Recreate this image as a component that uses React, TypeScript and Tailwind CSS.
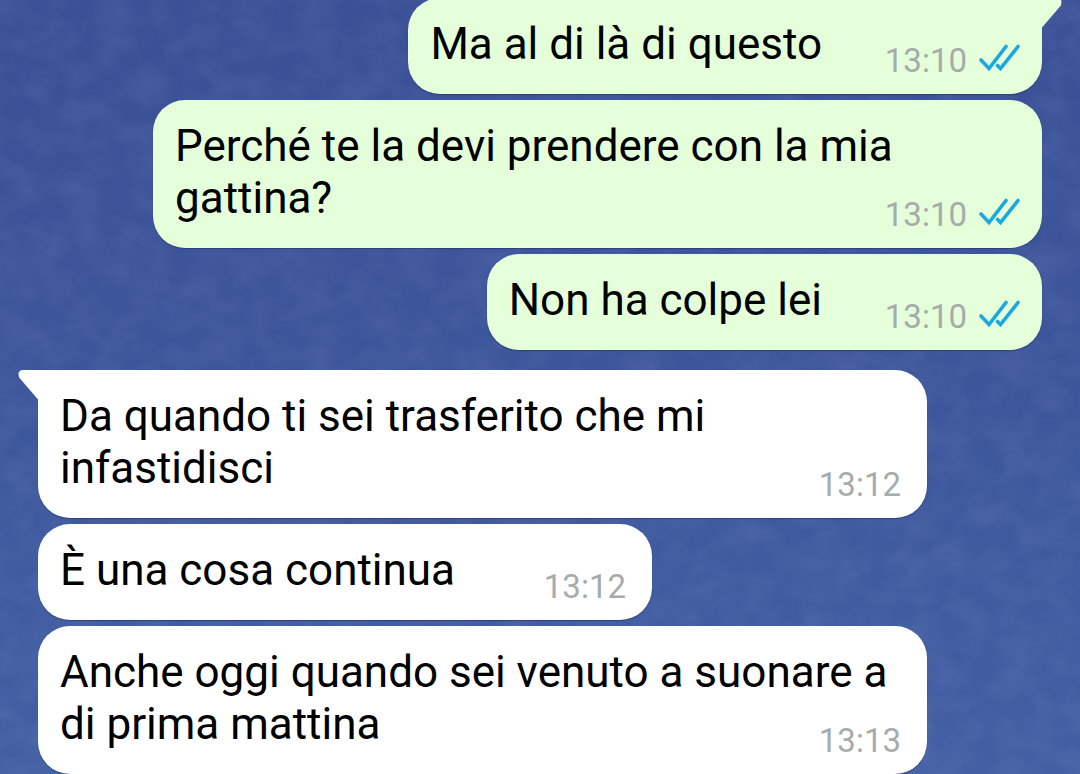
import clsx from "clsx";

interface Message {
  id: number;
  text: string;
  time: string;
  sent?: boolean;
  tail?: boolean;
}

const groups: Message[][] = [
  [
    { id: 1, text: "Ma al di là di questo", time: "13:10", sent: true, tail: true },
    { id: 2, text: "Perché te la devi prendere con la mia gattina?", time: "13:10", sent: true },
    { id: 3, text: "Non ha colpe lei", time: "13:10", sent: true },
  ],
  [
    { id: 4, text: "Da quando ti sei trasferito che mi infastidisci", time: "13:12", tail: true },
    { id: 5, text: "È una cosa continua", time: "13:12" },
    { id: 6, text: "Anche oggi quando sei venuto a suonare a di prima mattina", time: "13:13" },
  ],
];

export default function App() {
  return (
    <main className="relative isolate min-h-screen overflow-hidden bg-linear-to-b from-[#3b5096] via-[#3d569b] to-[#4360a4] font-[Roboto,sans-serif]">
      <Wallpaper />
      <div className="-mt-0.5 flex flex-col gap-5 px-[38px]">
        {groups.map((messages) => (
          <ul key={messages[0].id} className="flex flex-col gap-1.5">
            {messages.map((message) => (
              <Bubble key={message.id} message={message} />
            ))}
          </ul>
        ))}
      </div>
    </main>
  );
}

const Bubble = ({ message }: { message: Message }) => {
  const { text, time, sent, tail } = message;

  return (
    <li
      className={clsx(
        "relative w-fit max-w-[calc(100%-115px)] rounded-[32px] px-[22px] pt-5 pb-6 shadow-[0_1px_1px_rgba(20,35,80,0.45)]",
        sent ? "self-end bg-[#e4ffda]" : "self-start bg-white",
        tail && (sent ? "rounded-tr-none" : "rounded-tl-none"),
      )}
    >
      {tail && <Tail sent={sent} />}
      <p className="text-[44px] leading-[52px] text-black">
        {text}
        {/* keeps the last line clear of the time */}
        <span className={clsx("inline-block h-1", sent ? "w-[198px]" : "w-[175px]")} />
      </p>
      <div
        className={clsx(
          "absolute bottom-[13px] flex items-center gap-3 text-[33px] leading-10 text-[#a6abac]",
          sent ? "right-[21px]" : "right-[26px]",
        )}
      >
        <time>{time}</time>
        {sent && <ReadTicks />}
      </div>
    </li>
  );
};

const Tail = ({ sent }: { sent?: boolean }) => (
  <svg
    viewBox="0 0 21 30"
    aria-hidden="true"
    className={clsx("absolute top-0 h-[30px] w-[21px]", sent ? "left-full -ml-px -scale-x-100 text-[#e4ffda]" : "right-full -mr-px text-white")}
  >
    <path d="M21 0H5Q0.500 0 0.500 4.500Q0.500 6.500 2 8.500L20 29.500H21Z" fill="currentColor" />
  </svg>
);

const ReadTicks = () => (
  <svg
    viewBox="0 0 42 28"
    role="img"
    aria-label="Letto"
    className="mb-1.5 h-7 w-[42px]"
    fill="none"
    stroke="#1ba8e0"
    strokeWidth="3.6"
    strokeLinecap="round"
  >
    <path d="M2 16L10 24.500L27 2.500" />
    <path d="M18.500 21.500L21.500 24.500L39 2.500" />
  </svg>
);

const Wallpaper = () => (
  <svg aria-hidden="true" className="absolute inset-0 -z-10 size-full opacity-10">
    <filter id="grain" x="0" y="0" width="100%" height="100%">
      <feTurbulence type="fractalNoise" baseFrequency="0.03 0.04" numOctaves="3" seed="4" />
      <feColorMatrix values="0 0 0 0 0.45  0 0 0 0 0.55  0 0 0 0 0.85  1.600 0 0 0 -0.500" />
    </filter>
    <rect width="100%" height="100%" filter="url(#grain)" />
  </svg>
);
